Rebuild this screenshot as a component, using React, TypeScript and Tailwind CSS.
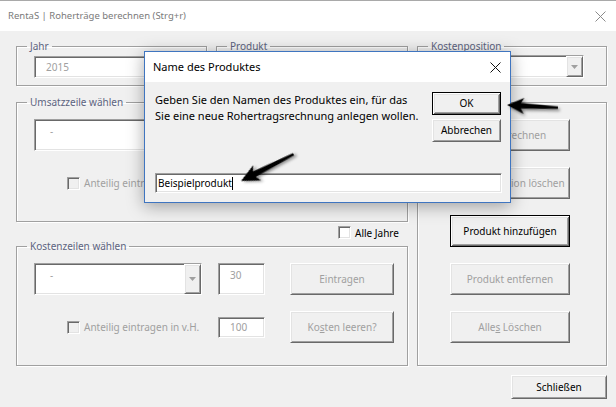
import React from "react";

const sunken =
  "border border-t-[#a0a0a0] border-l-[#a0a0a0] border-b-white border-r-white shadow-[inset_1px_1px_0_#696969,inset_-1px_-1px_0_#e3e3e3]";
const raised =
  "border border-t-white border-l-white border-b-[#696969] border-r-[#696969] shadow-[inset_1px_1px_0_#e3e3e3,inset_-1px_-1px_0_#a0a0a0]";
const defaultBtn =
  "border border-black shadow-[inset_1px_1px_0_#fff,inset_-1px_-1px_0_#696969,inset_2px_2px_0_#e3e3e3,inset_-2px_-2px_0_#a0a0a0]";
const frame = "border border-[#a0a0a0] shadow-[inset_1px_1px_0_#fff,1px_1px_0_#fff]";

function Btn({ children, w, def = false, disabled = true }: { children: React.ReactNode; w: string; def?: boolean; disabled?: boolean }) {
  return (
    <div
      className={`${w} h-[32px] flex items-center justify-center bg-[#f0f0f0] text-[10px] ${def ? defaultBtn : raised} ${
        disabled ? "text-[#a0a0a0]" : "text-black"
      }`}
    >
      <span className="whitespace-pre">{children}</span>
    </div>
  );
}

function Check({ enabled = false }: { enabled?: boolean }) {
  return <span className={`inline-block w-[13px] h-[13px] shrink-0 ${sunken} ${enabled ? "bg-white" : "bg-[#f0f0f0]"}`} />;
}

function Arrow() {
  return (
    <div className={`w-[17px] h-full shrink-0 flex items-center justify-center bg-[#f0f0f0] ${raised}`}>
      <svg width="7" height="4" viewBox="0 0 7 4">
        <path d="M0 0H7L3.5 4Z" fill="#a0a0a0" />
      </svg>
    </div>
  );
}

function Legend({ children }: { children: React.ReactNode }) {
  return <legend className="ml-[10px] px-[3px] text-[10px] leading-[16px] text-[#5d6480]">{children}</legend>;
}

function LineGroup({ title, leeren }: { title: string; leeren: React.ReactNode }) {
  return (
    <fieldset className={`${frame} p-0`}>
      <Legend>{title}</Legend>
      <div className="pl-[17px] pt-[9px] pb-[22px]">
        <div className="flex items-start h-[32px]">
          <div className={`w-[168px] h-[32px] bg-white flex justify-between ${sunken}`}>
            <span className="pl-[15px] pt-[3px] text-[10px] leading-[16px] text-[#a0a0a0]">-</span>
            <Arrow />
          </div>
          <div className={`ml-[16px] w-[47px] h-[32px] bg-white pl-[11px] pt-[3px] text-[10px] leading-[16px] text-[#a0a0a0] ${sunken}`}>30</div>
          <div className="ml-[25px]">
            <Btn w="w-[104px]">Eintragen</Btn>
          </div>
        </div>
        <div className="flex items-center h-[32px] mt-[16px]">
          <div className="w-[168px] pl-[33px] flex items-center gap-[4px] text-[10px] text-[#a0a0a0] whitespace-nowrap">
            <Check />
            <span>Anteilig eintragen in v.H.</span>
          </div>
          <div className={`ml-[16px] w-[47px] h-[21px] bg-white pl-[11px] flex items-center text-[10px] text-[#a0a0a0] ${sunken}`}>100</div>
          <div className="ml-[25px]">
            <Btn w="w-[104px]">{leeren}</Btn>
          </div>
        </div>
      </div>
    </fieldset>
  );
}

export default function App() {
  return (
    <div className="relative w-[616px] h-[407px] overflow-hidden bg-[#f0f0f0] font-['Noto_Sans',sans-serif] text-[10px] text-black">
      {/* Titelleiste */}
      <div className="h-[31px] bg-white border-t border-[#a9a9a9] flex items-center justify-between pl-[8px] pr-[10px]">
        <span className="text-[9.5px] text-[#7a7a7a]">RentaS | Roherträge berechnen (Strg+r)</span>
        <svg width="11" height="11" viewBox="0 0 11 11">
          <path d="M0.5 0.5L10.5 10.5M10.5 0.5L0.5 10.5" stroke="#8a8a8a" strokeWidth="1" />
        </svg>
      </div>

      <div className="pl-[16px] pr-[9px]">
        {/* Jahr / Produkt / Kostenposition */}
        <div className="flex gap-[9px] mt-[7px]">
          <fieldset className={`${frame} w-[191px] p-0`}>
            <Legend>Jahr</Legend>
            <div className="pl-[17px] pt-[2px] pb-[7px]">
              <div className={`w-[156px] h-[22px] bg-white pl-[11px] flex items-center text-[#a0a0a0] ${sunken}`}>2015</div>
            </div>
          </fieldset>
          <fieldset className={`${frame} w-[192px] p-0`}>
            <Legend>Produkt</Legend>
            <div className="pl-[17px] pt-[2px] pb-[7px]">
              <div className={`w-[156px] h-[22px] bg-white ${sunken}`} />
            </div>
          </fieldset>
          <fieldset className={`${frame} w-[190px] p-0`}>
            <Legend>Kostenposition</Legend>
            <div className="pl-[16px] pt-[1px] pb-[7px]">
              <div className={`w-[150px] h-[23px] bg-white flex justify-end ${sunken}`}>
                <Arrow />
              </div>
            </div>
          </fieldset>
        </div>

        <div className="flex gap-[9px] mt-[8px]">
          <div className="w-[392px]">
            <LineGroup
              title="Umsatzzeile wählen"
              leeren={
                <>
                  Um<span className="underline">s</span>atz leeren?
                </>
              }
            />
            <div className="h-[16px] flex items-start pl-[322px] gap-[4px]">
              <span className="mt-[4px]">
                <Check enabled />
              </span>
              <span className="mt-[3px] leading-[16px]">Alle Jahre</span>
            </div>
            <LineGroup
              title="Kostenzeilen wählen"
              leeren={
                <>
                  Ko<span className="underline">s</span>ten leeren?
                </>
              }
            />
          </div>
          <div className={`${frame} mt-[8px] w-[190px] h-[264px] pl-[32px] pt-[16px] flex flex-col gap-[16px]`}>
            <Btn w="w-[120px]">Neu berechnen</Btn>
            <Btn w="w-[120px]">Kostenposition löschen</Btn>
            <Btn w="w-[120px]" def disabled={false}>
              Produkt hinzufügen
            </Btn>
            <Btn w="w-[120px]">Produkt entfernen</Btn>
            <Btn w="w-[120px]">
              Alle<span className="underline">s</span> Löschen
            </Btn>
          </div>
        </div>

        <div className="flex justify-end mt-[9px]">
          <div className={`w-[96px] h-[24px] flex items-center justify-center bg-[#f0f0f0] ${raised}`}>Schließen</div>
        </div>
      </div>

      {/* Dialog */}
      <div className="absolute left-[144px] top-[51px] w-[367px] h-[152px] border border-[#3f75c0] bg-[#f0f0f0] shadow-[0_3px_16px_rgba(0,0,0,0.35)] flex flex-col">
        <div className="h-[30px] bg-white flex items-center justify-between pl-[8px] pr-[9px]">
          <span className="text-[11px]">Name des Produktes</span>
          <svg width="11" height="11" viewBox="0 0 11 11">
            <path d="M0.5 0.5L10.5 10.5M10.5 0.5L0.5 10.5" stroke="#111" strokeWidth="1" />
          </svg>
        </div>
        <div className="flex-1 pl-[10px] pr-[9px] pt-[10px]">
          <div className="flex">
            <p className="flex-1 text-[11px] leading-[16px] whitespace-nowrap">
              Geben Sie den Namen des Produktes ein, für das
              <br />
              Sie eine neue Rohertragsrechnung anlegen wollen.
            </p>
            <div className="shrink-0 flex flex-col gap-[4px]">
              <div className={`w-[69px] h-[23px] flex items-center justify-center bg-[#f0f0f0] text-[10px] ${defaultBtn}`}>OK</div>
              <div className={`w-[69px] h-[23px] flex items-center justify-center bg-[#f0f0f0] text-[10px] ${raised}`}>Abbrechen</div>
            </div>
          </div>
          <div className={`mt-[31px] w-[347px] h-[20px] bg-white pl-[2px] flex items-center text-[10px] ${sunken}`}>
            <span>Beispielprodukt</span>
            <span className="w-px h-[13px] bg-black" />
          </div>
        </div>
      </div>

      {/* Pfeile */}
      <svg className="absolute inset-0 pointer-events-none" width="616" height="407" viewBox="0 0 616 407">
        <defs>
          <filter id="sh" x="-30%" y="-30%" width="160%" height="160%">
            <feDropShadow dx="2" dy="2" stdDeviation="1.5" floodColor="#000" floodOpacity="0.45" />
          </filter>
        </defs>
        <path d="M0 0L17 -8L14 -2.8L51 -1.2L51 1.2L14 2.8L17 8Z" transform="translate(507 105) rotate(3)" fill="#000" filter="url(#sh)" />
        <path d="M0 0L18 -8.5L15 -3L59 -1.3L59 1.3L15 3L18 8.5Z" transform="translate(241 181) rotate(-27)" fill="#000" filter="url(#sh)" />
      </svg>
    </div>
  );
}
